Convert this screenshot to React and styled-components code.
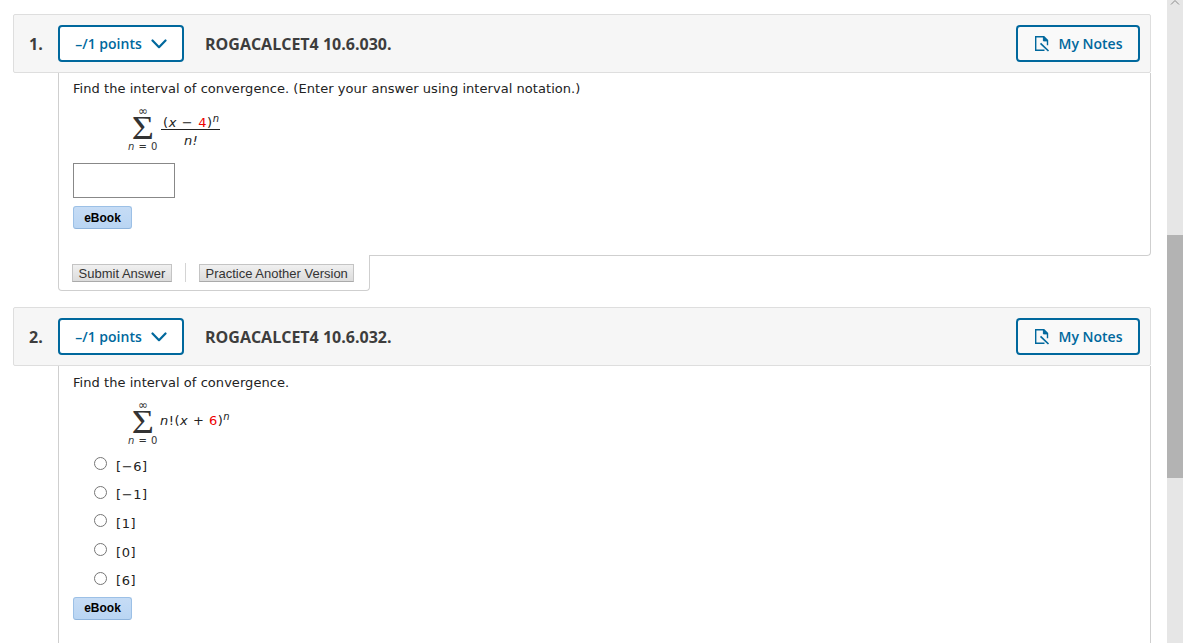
import React from 'react';
import styled, { createGlobalStyle } from 'styled-components';

const Global = createGlobalStyle`
  html, body { margin: 0; padding: 0; height: 100%; overflow: hidden; background: #fff; }
  #root { height: 100%; }
`;
const Page = styled.div`display: flex; height: 643px; overflow: hidden;`;
const Main = styled.main`flex: 1; min-width: 0; padding: 14px 16px 0 13px;`;
const Question = styled.section`margin-bottom: 16px;`;
const Header = styled.header`
  display: flex; align-items: center; height: 59px; box-sizing: border-box;
  background: #f6f6f6; border: 1px solid #dedede; border-radius: 2px;
  font-family: "Open Sans", sans-serif; color: #3d3d3d;
`;
const Num = styled.span`width: 44px; padding-left: 15px; box-sizing: border-box; font-size: 16px; font-weight: 700;`;
const OutlineButton = styled.button`
  display: inline-flex; align-items: center; justify-content: center;
  height: 37px; box-sizing: border-box; padding: 0; width: ${p => p.$w}px;
  background: #fff; border: 2px solid #00689d; border-radius: 4px;
  font-family: "Open Sans", sans-serif; font-size: 14px; font-weight: 600; color: #00689d;
  gap: ${p => p.$gap}px;
`;
const PointsButton = styled(OutlineButton)`background: #fff;`;
const Title = styled.h2`margin: 0 0 0 21px; flex: 1; font-size: 16px; font-weight: 700; color: #3d3d3d;`;
const NotesButton = styled(OutlineButton)`margin-right: 10px; background: #f9f9f9;`;
const Body = styled.div`
  margin-left: 45px; box-sizing: border-box; height: ${p => p.$h}px;
  border: 1px solid #cfcfcf; border-top: none; border-radius: 0 0 4px 0;
  padding: ${p => p.$pt}px 14px 0;
  font: 13px/18px "DejaVu Sans", Verdana, sans-serif; color: #222;
`;
const Prompt = styled.p`margin: 0; font-size: 13px; line-height: 18px; letter-spacing: .05px;`;
const MathBlock = styled.div`
  display: flex; align-items: flex-start; margin: 8px 0 0 55px; height: ${p => p.$h}px;
  font-family: "DejaVu Sans", sans-serif;
`;
const Limits = styled.div`
  display: flex; flex-direction: column; align-items: center; width: 30px; color: #333;
`;
const Small = styled.span`font-size: 10px; line-height: 10px; height: 10px; letter-spacing: .5px; white-space: nowrap;`;
const InfinityMark = styled(Small)`font-size: 12px; letter-spacing: 0;`;
const SmallItalicN = styled.i`font-style: italic;`;
const Sigma = styled.span`font: 34px/26px "Liberation Serif", serif; height: 26px; color: #333; transform: translateY(-1px) scaleX(1.12);`;
const Fraction = styled.div`
  display: inline-flex; flex-direction: column; align-items: center; margin: 9px 0 0 3px; font-size: 13px;
`;
const Numer = styled.div`border-bottom: 1px solid #222; padding: 0 0 0 2px; line-height: 16px; height: 15px; box-sizing: border-box; letter-spacing: .65px; white-space: nowrap;`;
const Denom = styled.div`line-height: 22px; font-style: italic; letter-spacing: .3px; padding-left: 1px;`;
const Inline = styled.div`margin: 13px 0 0 2px; font-size: 13px; line-height: 16px; letter-spacing: .5px; white-space: nowrap;`;
const Red = styled.span`color: #ee0000;`;
const Var = styled.i`font-style: italic;`;
const Sup = styled.sup`font-size: 10px; line-height: 0; vertical-align: 5px; font-style: italic;`;
const AnswerInput = styled.input`
  display: block; box-sizing: border-box; width: 102px; height: 35px; margin: 0;
  border: 1px solid #888; background: #fff; padding: 0;
`;
const EBook = styled.button`
  display: block; width: 59px; height: 23px; padding: 0; box-sizing: border-box; margin-top: ${p => p.$mt}px;
  font: bold 12px "Liberation Sans", Arial, sans-serif; color: #000;
  border: 1px solid #9cc0e6; border-bottom-color: #8fb4dc; border-radius: 3px;
  background: linear-gradient(#c6dcf5, #b9d5f3);
`;
const Tab = styled.div`
  position: relative; margin: -1px 0 0 45px; width: 312px; height: 36px; box-sizing: border-box;
  background: #fff; border: 1px solid #cfcfcf; border-top: none; border-radius: 0 0 4px 4px;
  display: flex; align-items: flex-start; padding: 9px 0 0 13px;
`;
const GrayButton = styled.button`
  height: 18px; padding: 0 5.6px; box-sizing: border-box;
  font: 13px "Liberation Sans", Arial, sans-serif; color: #333; white-space: nowrap;
  background: linear-gradient(#f0f0f0, #dcdcdc); border: 1px solid #c4c4c4; border-bottom-color: #aaa; border-radius: 0;
`;
const Divider = styled.span`width: 1px; height: 19px; background: #d4d4d4; margin: -1px 13px 0 13px;`;
const Options = styled.div`margin: 0 0 0 20px;`;
const Option = styled.label`
  display: flex; align-items: center; height: 28.6px; font: 13px "DejaVu Sans", sans-serif; color: #222;
`;
const Radio = styled.input`margin: -5px 9px 0 1px; width: 13px; height: 13px; flex: none;`;
const OptionText = styled.span`letter-spacing: .6px;`;
const Track = styled.aside`
  position: relative; width: 16px; flex: none; background: #e6e6e6;
`;
const Thumb = styled.div`position: absolute; left: 0; right: 0; top: 235px; height: 243px; background: #b3b3b3;`;
const ScrollUp = styled.svg`position: absolute; left: 3px; top: -1px;`;

const Chevron = () => (
  <svg width="16" height="10" viewBox="0 0 16 10" fill="none" stroke="#00689d" strokeWidth="2.2" strokeLinecap="round" strokeLinejoin="round">
    <path d="M1.5 1.5 8 8.2 14.5 1.5" />
  </svg>
);
const NoteIcon = () => (
  <svg width="16" height="17" viewBox="0 0 16 17" fill="none" stroke="#00689d" strokeWidth="1.4">
    <path d="M10.5 15.3H1.7V1.7h8.2l3.6 3.6v5" />
    <path d="M9.4 1.7v4.2h4.2z" fill="#00689d" strokeWidth="1" />
    <path d="M6.5 8.3 14.5 16" strokeWidth="1.7" />
  </svg>
);

const Head = ({ n, title }) => (
  <Header>
    <Num>{n}.</Num>
    <PointsButton $w={126} $gap={9}>–/1 points <Chevron /></PointsButton>
    <Title>{title}</Title>
    <NotesButton $w={124} $gap={9}><NoteIcon />My Notes</NotesButton>
  </Header>
);

const Lim = () => (
  <Limits>
    <InfinityMark>∞</InfinityMark>
    <Sigma>Σ</Sigma>
    <Small><SmallItalicN>n</SmallItalicN> = 0</Small>
  </Limits>
);

export default function App() {
  return (
    <Page>
      <Global />
      <Main>
        <Question>
          <Head n="1" title="ROGACALCET4 10.6.030." />
          <Body $h={183} $pt={7}>
            <Prompt>Find the interval of convergence. (Enter your answer using interval notation.)</Prompt>
            <MathBlock $h={57}>
              <Lim />
              <Fraction>
                <Numer>(<Var>x</Var> − <Red>4</Red>)<Sup>n</Sup></Numer>
                <Denom>n!</Denom>
              </Fraction>
            </MathBlock>
            <AnswerInput aria-label="answer" />
            <EBook $mt={8}>eBook</EBook>
          </Body>
          <Tab>
            <GrayButton>Submit Answer</GrayButton>
            <Divider />
            <GrayButton>Practice Another Version</GrayButton>
          </Tab>
        </Question>
        <Question>
          <Head n="2" title="ROGACALCET4 10.6.032." />
          <Body $h={300} $pt={8}>
            <Prompt>Find the interval of convergence.</Prompt>
            <MathBlock $h={52}>
              <Lim />
              <Inline><Var>n</Var>!(<Var>x</Var> + <Red>6</Red>)<Sup>n</Sup></Inline>
            </MathBlock>
            <Options>
              {['[−6]', '[−1]', '[1]', '[0]', '[6]'].map(o => (
                <Option key={o}><Radio type="radio" name="q2" /><OptionText>{o}</OptionText></Option>
              ))}
            </Options>
            <EBook $mt={2}>eBook</EBook>
          </Body>
        </Question>
      </Main>
      <Track>
        <ScrollUp width="10" height="8" viewBox="0 0 10 8" fill="none" stroke="#8a8a8a"><path d="M1 5.5 5 1.5 9 5.5" /></ScrollUp>
        <Thumb />
      </Track>
    </Page>
  );
}
